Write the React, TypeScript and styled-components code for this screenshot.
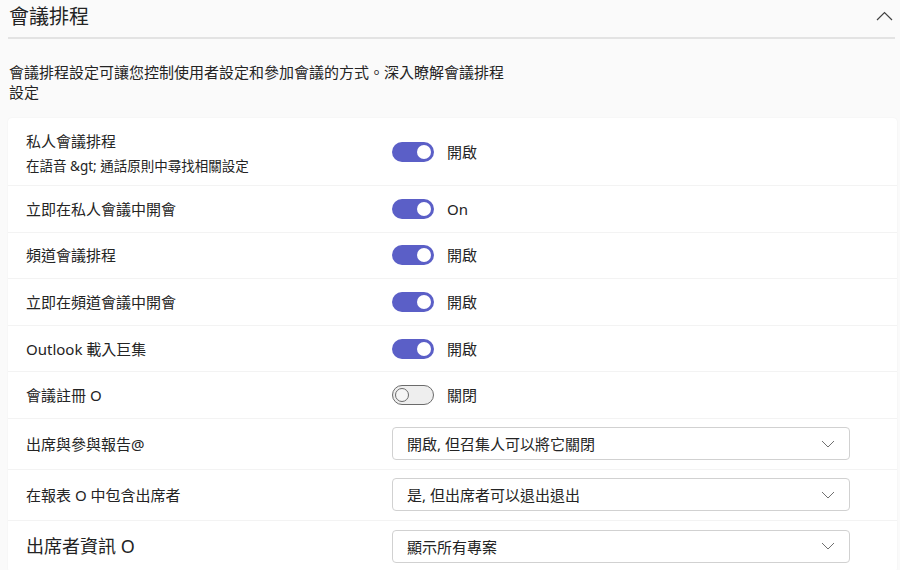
import React from "react";
import styled, { createGlobalStyle } from "styled-components";

const Global = createGlobalStyle`
  html, body { margin: 0; padding: 0; background: #fafafa; }
  body {
    font-family: "Segoe UI", "Noto Sans", "Noto Sans CJK TC", sans-serif;
    color: #242424;
  }
`;

const Page = styled.div`
  padding: 0 5px 0 8px;
  width: 900px;
  height: 570px;
  box-sizing: border-box;
  overflow: hidden;
`;

const Header = styled.div`
  height: 39px;
  display: flex;
  align-items: center;
  justify-content: space-between;
  border-bottom: 2px solid #e3e3e3;
  box-sizing: border-box;
`;

const Title = styled.h2`
  margin: 0;
  font-size: 20px;
  font-weight: 400;
  line-height: 24px;
  padding-left: 1px;
  margin-top: -3px;
`;

const CollapseBtn = styled.button`
  border: 0;
  background: transparent;
  padding: 0;
  margin-right: 2px;
  margin-top: -5px;
  display: flex;
  color: #424242;
`;

const Description = styled.p`
  margin: 23px 0 16px 1px;
  max-width: 496px;
  font-size: 15px;
  line-height: 20px;
`;

const Card = styled.div`
  background: #fff;
  border-radius: 4px;
  box-shadow: 0 0 2px rgba(0, 0, 0, 0.06);
  margin-right: -2px;
`;

const Row = styled.div<{ $h: number }>`
  display: grid;
  grid-template-columns: 366px 1fr;
  align-items: center;
  height: ${(p) => p.$h}px;
  padding-left: 18px;
  padding-right: 47px;
  box-sizing: border-box;
  border-bottom: 1px solid #f3f3f3;
  &:last-child { border-bottom: 0; }
`;

const Label = styled.div<{ $big?: boolean }>`
  font-size: ${(p) => (p.$big ? 18 : 15)}px;
  line-height: 20px;
`;

const SubLabel = styled.div`
  font-size: 13.5px;
  line-height: 20px;
  margin-top: 5px;
`;

const LabelBlock = styled.div`
  padding-top: 4px;
`;

const ToggleWrap = styled.div`
  display: flex;
  align-items: center;
  gap: 13px;
`;

const Track = styled.span<{ $on: boolean }>`
  width: 42px;
  height: 20px;
  border-radius: 10px;
  box-sizing: border-box;
  display: flex;
  align-items: center;
  padding: 0 3px;
  justify-content: ${(p) => (p.$on ? "flex-end" : "flex-start")};
  background: ${(p) => (p.$on ? "#5b5fc7" : "#eeeeee")};
  border: ${(p) => (p.$on ? "0" : "1px solid #6b6b6b")};
`;

const Thumb = styled.span<{ $on: boolean }>`
  width: 14px;
  height: 14px;
  border-radius: 50%;
  box-sizing: border-box;
  background: ${(p) => (p.$on ? "#fff" : "#f6f6f6")};
  border: ${(p) => (p.$on ? "0" : "1.5px solid #6b6b6b")};
  margin-left: ${(p) => (p.$on ? "0" : "-1px")};
`;

const StateText = styled.span`
  font-size: 15px;
  line-height: 20px;
`;

const Select = styled.div`
  height: 33px;
  border: 1px solid #d1d1d1;
  border-radius: 4px;
  box-sizing: border-box;
  display: flex;
  align-items: center;
  justify-content: space-between;
  padding: 0 14px 0 14px;
  font-size: 15px;
  background: #fff;
`;

const ChevronDown = () => (
  <svg width="14" height="8" viewBox="0 0 14 8" fill="none">
    <path d="M1 1l6 6 6-6" stroke="#707070" strokeWidth="1" />
  </svg>
);

const ChevronUp = () => (
  <svg width="17" height="10" viewBox="0 0 17 10" fill="none">
    <path d="M1 9l7.5-7.5L16 9" stroke="#424242" strokeWidth="1.2" />
  </svg>
);

const Toggle = ({ on, text }: { on: boolean; text: string }) => (
  <ToggleWrap>
    <Track $on={on}>
      <Thumb $on={on} />
    </Track>
    <StateText>{text}</StateText>
  </ToggleWrap>
);

const toggles = [
  { label: "立即在私人會議中開會", on: true, text: "On" },
  { label: "頻道會議排程", on: true, text: "開啟" },
  { label: "立即在頻道會議中開會", on: true, text: "開啟" },
  { label: "Outlook 載入巨集", on: true, text: "開啟" },
  { label: "會議註冊 O", on: false, text: "關閉" },
];

const selects = [
  { label: "出席與參與報告@", value: "開啟, 但召集人可以將它關閉" },
  { label: "在報表 O 中包含出席者", value: "是, 但出席者可以退出退出" },
  { label: "出席者資訊 O", value: "顯示所有專案", big: true },
];

export default function App() {
  return (
    <Page>
      <Global />
      <Header>
        <Title>會議排程</Title>
        <CollapseBtn aria-label="摺疊">
          <ChevronUp />
        </CollapseBtn>
      </Header>
      <Description>
        會議排程設定可讓您控制使用者設定和參加會議的方式。深入瞭解會議排程設定
      </Description>
      <Card>
        <Row $h={68}>
          <LabelBlock>
            <Label>私人會議排程</Label>
            <SubLabel>在語音 &amp;gt; 通話原則中尋找相關設定</SubLabel>
          </LabelBlock>
          <Toggle on text="開啟" />
        </Row>
        {toggles.map((t) => (
          <Row $h={46.6} key={t.label}>
            <Label>{t.label}</Label>
            <Toggle on={t.on} text={t.text} />
          </Row>
        ))}
        {selects.map((s) => (
          <Row $h={51} key={s.label}>
            <Label $big={s.big}>{s.label}</Label>
            <Select>
              <span>{s.value}</span>
              <ChevronDown />
            </Select>
          </Row>
        ))}
      </Card>
    </Page>
  );
}
